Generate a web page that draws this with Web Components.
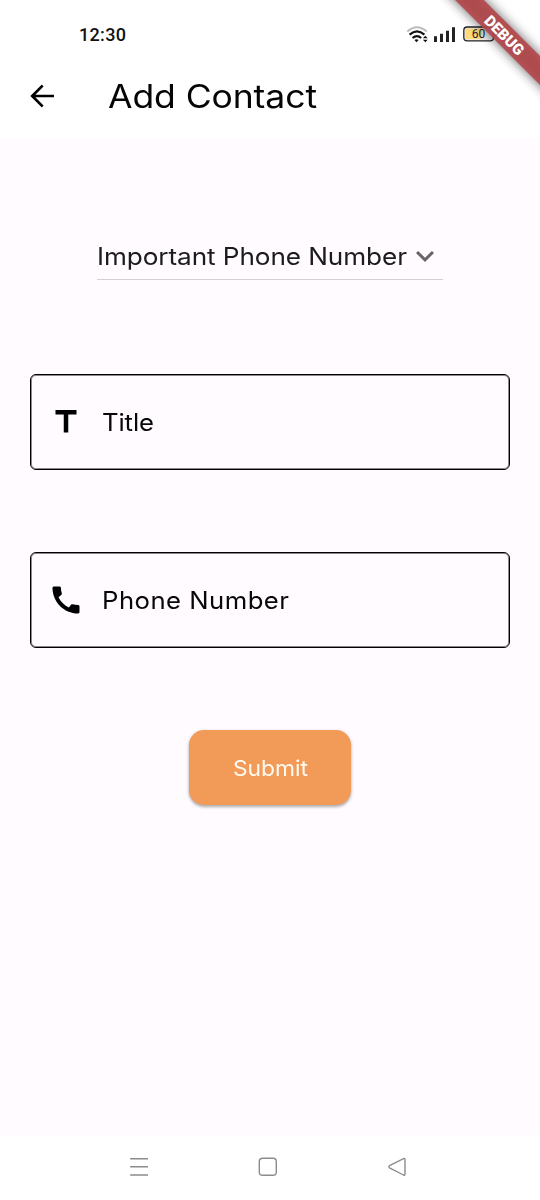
<!DOCTYPE html>
<html lang="en">
<head>
<meta charset="utf-8">
<title>Add Contact</title>
<style>
html,body{margin:0;padding:0;width:540px;height:1200px;overflow:hidden;background:#fff}
</style>
</head>
<body>
<contact-app></contact-app>
<script>
const define = (name, html, setup) => customElements.define(name, class extends HTMLElement {
  connectedCallback() {
    if (this.shadowRoot) return;
    this.attachShadow({mode: 'open'}).innerHTML = html;
    if (setup) setup(this, this.shadowRoot);
  }
});

/* Text widened by "stretch" and tracked out to the width given in "width". */
define('tracked-text', `<style>
:host{display:block;white-space:nowrap;font-feature-settings:"cv11"}
span{display:inline-block;transform-origin:0 50%}
</style><span><slot></slot></span>`, (host, root) => {
  const span = root.querySelector('span');
  const width = Number(host.getAttribute('width'));
  const stretch = Number(host.getAttribute('stretch') || 1);
  const text = root.querySelector('slot').assignedNodes({flatten: true}).map(n => n.textContent).join('');
  const extra = (width / stretch - span.getBoundingClientRect().width) / (text.length - 1);
  span.style.letterSpacing = extra.toFixed(3) + 'px';
  span.style.transform = `scaleX(${stretch})`;
  host.style.width = width + 'px';
});

define('status-bar', `<style>
:host{display:flex;align-items:center;justify-content:space-between;height:54px;padding:14px 44px 0 79px;box-sizing:border-box}
tracked-text{font:500 18px/40px Roboto,"Liberation Sans",sans-serif;color:#111;padding-top:1px}
svg{display:block}
.icons{display:flex}
</style>
<tracked-text width="47">12:30</tracked-text>
<div class="icons"><svg width="90" height="20" viewBox="406 24 90 20">
<g fill="none" stroke-linecap="butt">
<path d="M407.3 31.5Q417 22.8 426.7 31.5" stroke="#bbb" stroke-width="1.9"/>
<path d="M409.6 34.6Q417 28 424.4 34.6" stroke="#111" stroke-width="2.1"/>
<path d="M412.5 38Q417 34.2 421.2 38" stroke="#111" stroke-width="2.1"/>
</g>
<path d="M414.4 40.1Q416.5 38.5 418.6 40.1L416.5 42.3ZM422.9 38.3L425.3 35.8 427.7 38.3ZM422.9 39.8L425.3 42.3 427.7 39.8Z" fill="#111"/>
<path d="M434 36.2h3v5.8h-3zM440 33.8h3v8.2h-3zM446 30.8h3v11.2h-3zM452 27.2h3v14.8h-3z" fill="#222"/>
<rect x="463.8" y="27" width="29.7" height="13.8" rx="3.4" fill="#eee" stroke="#222" stroke-width="1.3"/>
<path d="M467 28.5H482V39.3H467Q465.3 39.3 465.3 37.6V30.2Q465.3 28.5 467 28.5Z" fill="#ffd97c"/>
<path d="M495.2 31.5v5" stroke="#333" stroke-width="1.3"/>
<text x="478.5" y="38.3" text-anchor="middle" font-family="Roboto,sans-serif" font-size="12" fill="#222">60</text>
</svg></div>`);

define('app-bar', `<style>
:host{display:flex;align-items:center;height:84px;padding-left:24px;box-sizing:border-box}
svg{width:36px;height:36px;flex:none;margin-right:48px}
tracked-text{font:400 32px/48px Inter,sans-serif;color:#050505;padding-top:2px}
</style>
<svg viewBox="0 0 24 24"><path d="M20 11.1H7.6l5.4-5.5L11.9 4.4 4.2 12l7.7 7.6L13 18.4 7.6 12.9H20z" fill="#000"/></svg>
<tracked-text width="209" stretch="1.11"><slot></slot></tracked-text>`);

define('drop-down', `<style>
:host{display:flex;align-items:center;width:346px;height:47px;border-bottom:1px solid #d6d0d4;box-sizing:border-box}
tracked-text{font:400 24px/36px Inter,sans-serif;color:#1c1b1f;padding-top:2px}
svg{width:36px;height:36px;flex:none}
</style>
<tracked-text width="310" stretch="1.09"><slot></slot></tracked-text>
<svg viewBox="0 0 24 24"><path d="M7.41 8.59 12 13.17l4.59-4.58L18 10l-6 6-6-6z" fill="#666467"/></svg>`);

define('text-field', `<style>
:host{display:flex;align-items:center;height:96px;border:1px solid #000;box-shadow:inset 0 0 0 1px rgba(0,0,0,.45);border-radius:6px;box-sizing:border-box;padding-left:17px}
svg{width:36px;height:36px;flex:none;margin-right:18px}
tracked-text{font:400 24px/36px Inter,sans-serif;color:#080808;padding-top:1px}
</style>
<svg viewBox="0 0 24 24"><path fill="#000"/></svg><div></div>`, (host, root) => {
  root.querySelector('path').setAttribute('d', host.getAttribute('icon') === 'phone'
    ? 'M20.01 15.38c-1.23 0-2.42-.2-3.53-.56-.35-.12-.74-.03-1.01.24l-1.57 1.97c-2.83-1.35-5.48-3.9-6.89-6.83l1.95-1.66c.27-.28.35-.67.24-1.02-.37-1.11-.56-2.3-.56-3.53 0-.54-.45-.99-.99-.99H4.19C3.65 3 3 3.24 3 3.99 3 13.28 10.73 21 20.01 21c.71 0 .99-.63.99-1.18v-3.45c0-.54-.45-.99-.99-.99z'
    : 'M5 4v3h5.5v12h3V7H19V4z');
  const t = document.createElement('tracked-text');
  t.setAttribute('width', host.getAttribute('label-width'));
  t.setAttribute('stretch', '1.07');
  t.textContent = host.getAttribute('label');
  root.querySelector('div').replaceWith(t);
});

define('submit-button', `<style>
:host{display:flex;align-items:center;justify-content:center;width:162px;height:75px;border-radius:15px;background:#f29a57;box-shadow:0 2px 3px rgba(0,0,0,.26),0 1px 4px rgba(0,0,0,.12)}
tracked-text{font:400 22px/33px Inter,sans-serif;color:#fffaf0;padding-top:1px}
</style><tracked-text width="75" stretch="1.04"><slot></slot></tracked-text>`);

define('nav-bar', `<style>
:host{display:flex;justify-content:space-between;align-items:center;height:65px;padding:0 133px 1px 129px;box-sizing:border-box;background:#fff}
svg{width:20px;height:20px;fill:none;stroke:#8c8c8c;stroke-width:1.4;stroke-linejoin:round}
</style>
<svg viewBox="0 0 20 20"><path d="M1.2 1.7h17.8M1.2 9.8h17.8M1.2 18h17.8"/></svg>
<svg viewBox="0 0 20 20"><rect x="1.3" y="1.3" width="17" height="17" rx="3.4"/></svg>
<svg viewBox="0 0 20 20"><path d="M2.5 8.7 16.5 1.6Q18 1.1 18 2.7V17Q18 18.7 16.5 18L2.5 10.9Q1.2 9.8 2.5 8.7Z"/></svg>`);

define('debug-banner', `<style>
:host{display:block;position:absolute;top:0;right:0;width:120px;height:120px;overflow:hidden;pointer-events:none}
svg{display:block}
</style>
<svg width="120" height="120" viewBox="420 0 120 120">
<defs><filter id="s" x="-30%" y="-150%" width="160%" height="400%"><feGaussianBlur stdDeviation="6"/></filter></defs>
<g transform="translate(504.5 35) rotate(45)">
<rect x="-90" y="-10.2" width="180" height="20.4" fill="#000" opacity=".6" filter="url(#s)"/>
<rect x="-90" y="-10.2" width="180" height="20.4" fill="#b5474b" opacity=".9"/>
<text x="0" y="5.6" text-anchor="middle" textLength="49" font-family="Roboto,sans-serif" font-weight="900" font-size="15.3" fill="#fff">DEBUG</text>
</g></svg>`);

define('contact-app', `<style>
:host{display:flex;flex-direction:column;position:relative;width:540px;height:1200px;background:#fff;overflow:hidden}
main{flex:1;display:flex;flex-direction:column;align-items:center;background:#fffbff;padding:95px 30px 0}
text-field{align-self:stretch}
text-field:nth-of-type(1){margin-top:94px}
.second{margin-top:82px}
submit-button{margin-top:82px}
</style>
<status-bar></status-bar>
<app-bar>Add Contact</app-bar>
<main>
<drop-down>Important Phone Number</drop-down>
<text-field icon="title" label="Title" label-width="52"></text-field>
<text-field class="second" icon="phone" label="Phone Number" label-width="187"></text-field>
<submit-button>Submit</submit-button>
</main>
<nav-bar></nav-bar>
<debug-banner></debug-banner>`);
</script>
</body>
</html>
